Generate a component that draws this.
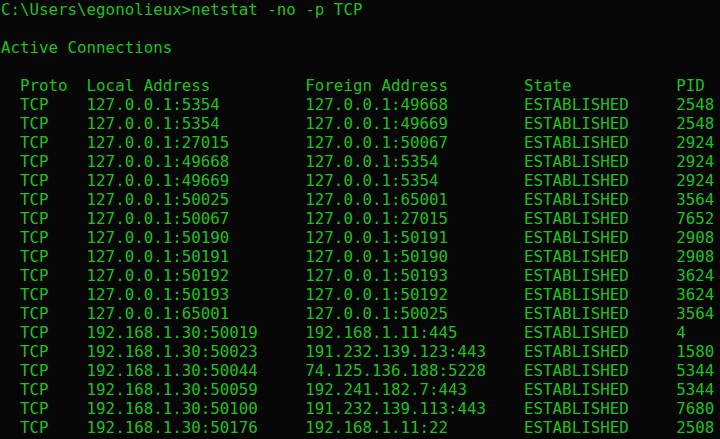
import React from "react";

const rows: [string, string, string, string, string][] = [
  ["TCP", "127.0.0.1:5354", "127.0.0.1:49668", "ESTABLISHED", "2548"],
  ["TCP", "127.0.0.1:5354", "127.0.0.1:49669", "ESTABLISHED", "2548"],
  ["TCP", "127.0.0.1:27015", "127.0.0.1:50067", "ESTABLISHED", "2924"],
  ["TCP", "127.0.0.1:49668", "127.0.0.1:5354", "ESTABLISHED", "2924"],
  ["TCP", "127.0.0.1:49669", "127.0.0.1:5354", "ESTABLISHED", "2924"],
  ["TCP", "127.0.0.1:50025", "127.0.0.1:65001", "ESTABLISHED", "3564"],
  ["TCP", "127.0.0.1:50067", "127.0.0.1:27015", "ESTABLISHED", "7652"],
  ["TCP", "127.0.0.1:50190", "127.0.0.1:50191", "ESTABLISHED", "2908"],
  ["TCP", "127.0.0.1:50191", "127.0.0.1:50190", "ESTABLISHED", "2908"],
  ["TCP", "127.0.0.1:50192", "127.0.0.1:50193", "ESTABLISHED", "3624"],
  ["TCP", "127.0.0.1:50193", "127.0.0.1:50192", "ESTABLISHED", "3624"],
  ["TCP", "127.0.0.1:65001", "127.0.0.1:50025", "ESTABLISHED", "3564"],
  ["TCP", "192.168.1.30:50019", "192.168.1.11:445", "ESTABLISHED", "4"],
  ["TCP", "192.168.1.30:50023", "191.232.139.123:443", "ESTABLISHED", "1580"],
  ["TCP", "192.168.1.30:50044", "74.125.136.188:5228", "ESTABLISHED", "5344"],
  ["TCP", "192.168.1.30:50059", "192.241.182.7:443", "ESTABLISHED", "5344"],
  ["TCP", "192.168.1.30:50100", "191.232.139.113:443", "ESTABLISHED", "7680"],
  ["TCP", "192.168.1.30:50176", "192.168.1.11:22", "ESTABLISHED", "2508"],
];

function fmt(r: string[]) {
  return (
    "  " +
    r[0].padEnd(7) +
    r[1].padEnd(23) +
    r[2].padEnd(23) +
    r[3].padEnd(16) +
    r[4]
  );
}

export default function App() {
  const lines = [
    "C:\\Users\\egonolieux>netstat -no -p TCP",
    "",
    "Active Connections",
    "",
    fmt(["Proto", "Local Address", "Foreign Address", "State", "PID"]),
    ...rows.map(fmt),
  ];
  return (
    <div className="w-[720px] h-[439px] overflow-hidden bg-[#060606]">
      <div
        className="pl-px text-[15.8px] leading-[19px] text-[#1ec21c] whitespace-pre"
        style={{ fontFamily: '"DejaVu Sans Mono", "Liberation Mono", monospace' }}
      >
        {lines.map((l, i) => (
          <div key={i} className="h-[19px]">
            {l}
          </div>
        ))}
      </div>
    </div>
  );
}
